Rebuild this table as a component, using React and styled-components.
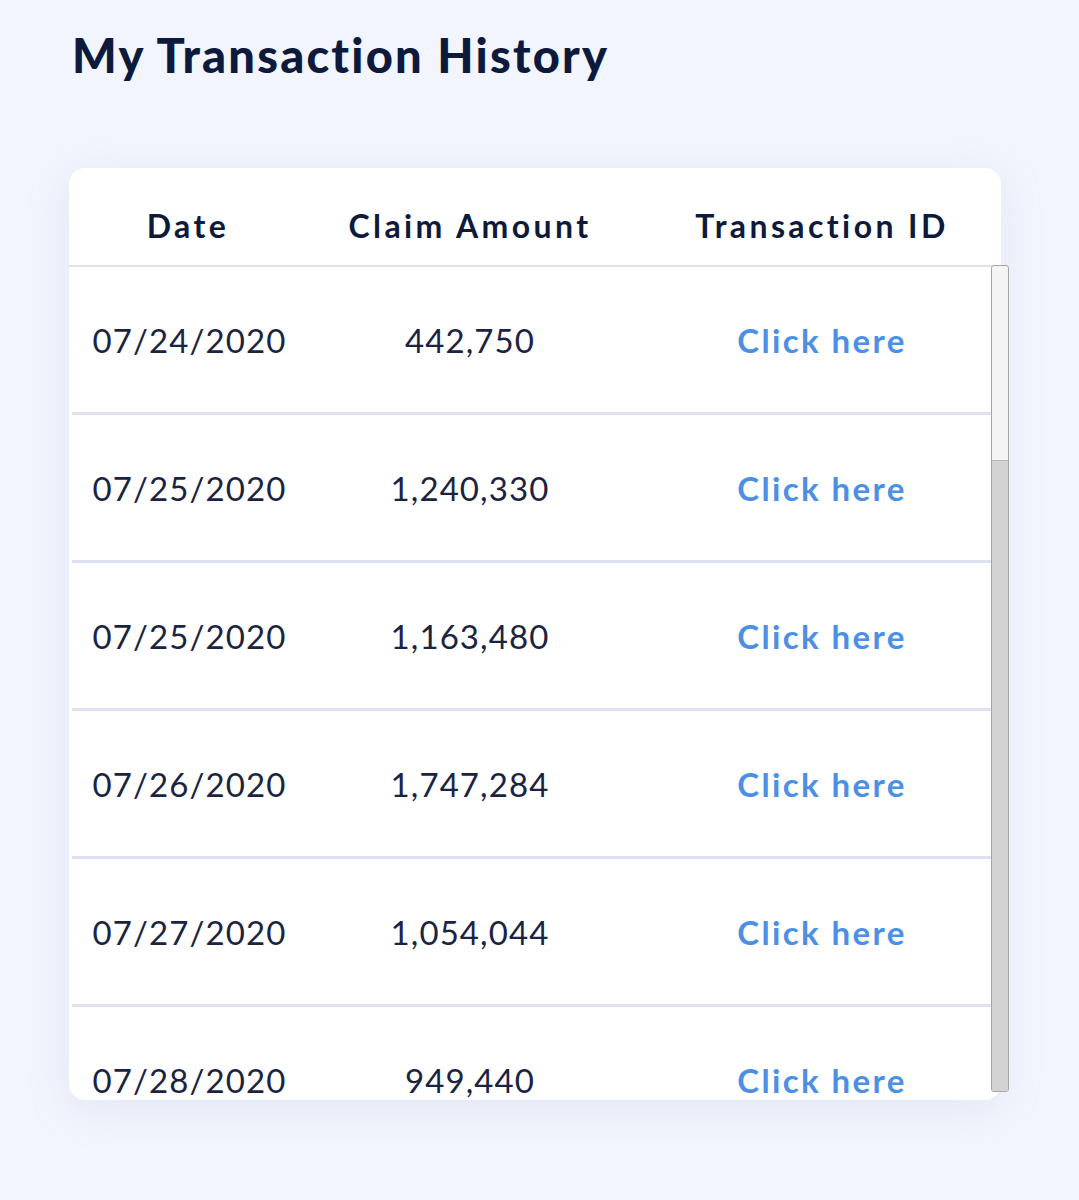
import React from "react";
import styled, { createGlobalStyle } from "styled-components";

const GlobalStyle = createGlobalStyle`
  html, body {
    margin: 0;
    padding: 0;
    background: #f2f5fd;
  }
  body {
    font-family: Lato, "Noto Sans", sans-serif;
    color: #14203f;
  }
`;

const Page = styled.div`
  width: 1079px;
  min-height: 1200px;
  padding: 25px 0 0 72px;
  box-sizing: border-box;
`;

const Title = styled.h1`
  margin: 0;
  font-size: 47px;
  line-height: 60px;
  font-weight: 900;
  color: #0e1a3c;
  letter-spacing: 2.2px;
`;

const Card = styled.div`
  margin-top: 83px;
  margin-left: -3px;
  width: 932px;
  height: 932px;
  box-sizing: border-box;
  background: #ffffff;
  border-radius: 16px;
  box-shadow: 0 8px 40px rgba(170, 180, 225, 0.22);
  display: flex;
  flex-direction: column;
`;

const HeaderRow = styled.div`
  height: 99px;
  padding-top: 17px;
  box-sizing: border-box;
  flex-shrink: 0;
  display: grid;
  grid-template-columns: 238px 326px 1fr;
  align-items: center;
  border-bottom: 2px solid #e1e2e9;
`;

const HeadCell = styled.div`
  text-align: center;
  font-size: 32px;
  font-weight: 700;
  color: #0e1a3c;
  letter-spacing: 3.4px;
  padding-left: ${(p) => p.$shift || 0}px;
`;

const Body = styled.div`
  flex: 1;
  min-height: 0;
  margin: 0 -8px 0 3px;
  display: flex;
`;

const List = styled.div`
  flex: 1;
  min-width: 0;
  overflow: hidden;
  border-bottom-left-radius: 14px;
`;

const Row = styled.div`
  height: 148px;
  box-sizing: border-box;
  display: grid;
  grid-template-columns: 235px 326px 1fr;
  align-items: center;
  border-bottom: 3px solid #dfe0f1;
`;

const Cell = styled.div`
  text-align: center;
  font-size: 33px;
  font-weight: 400;
  color: #1a2442;
  letter-spacing: 1.1px;
`;

const LinkCell = styled.a`
  justify-self: center;
  margin-left: 20px;
  font-size: 33px;
  font-weight: 700;
  color: #4b8fe6;
  text-decoration: none;
  cursor: pointer;
  letter-spacing: 2.4px;
`;

const Track = styled.div`
  width: 18px;
  flex-shrink: 0;
  margin: -2px 0 8px;
  box-sizing: border-box;
  border: 1px solid #a6a6a6;
  border-radius: 3px;
  background: #f4f4f4;
  display: flex;
  flex-direction: column;
  justify-content: flex-end;
  overflow: hidden;
`;

const Thumb = styled.div`
  height: ${(p) => p.$size}%;
  background: #d3d3d3;
  border-top: 1px solid #b9b9b9;
`;

const rows = [
  { date: "07/24/2020", amount: "442,750" },
  { date: "07/25/2020", amount: "1,240,330" },
  { date: "07/25/2020", amount: "1,163,480" },
  { date: "07/26/2020", amount: "1,747,284" },
  { date: "07/27/2020", amount: "1,054,044" },
  { date: "07/28/2020", amount: "949,440" },
];

export default function App() {
  return (
    <Page>
      <GlobalStyle />
      <Title>My Transaction History</Title>
      <Card>
        <HeaderRow>
          <HeadCell>Date</HeadCell>
          <HeadCell>Claim Amount</HeadCell>
          <HeadCell $shift={10}>Transaction ID</HeadCell>
        </HeaderRow>
        <Body>
          <List>
            {rows.map((r, i) => (
              <Row key={i}>
                <Cell>{r.date}</Cell>
                <Cell>{r.amount}</Cell>
                <LinkCell>Click here</LinkCell>
              </Row>
            ))}
          </List>
          <Track>
            <Thumb $size={76.4} />
          </Track>
        </Body>
      </Card>
    </Page>
  );
}
